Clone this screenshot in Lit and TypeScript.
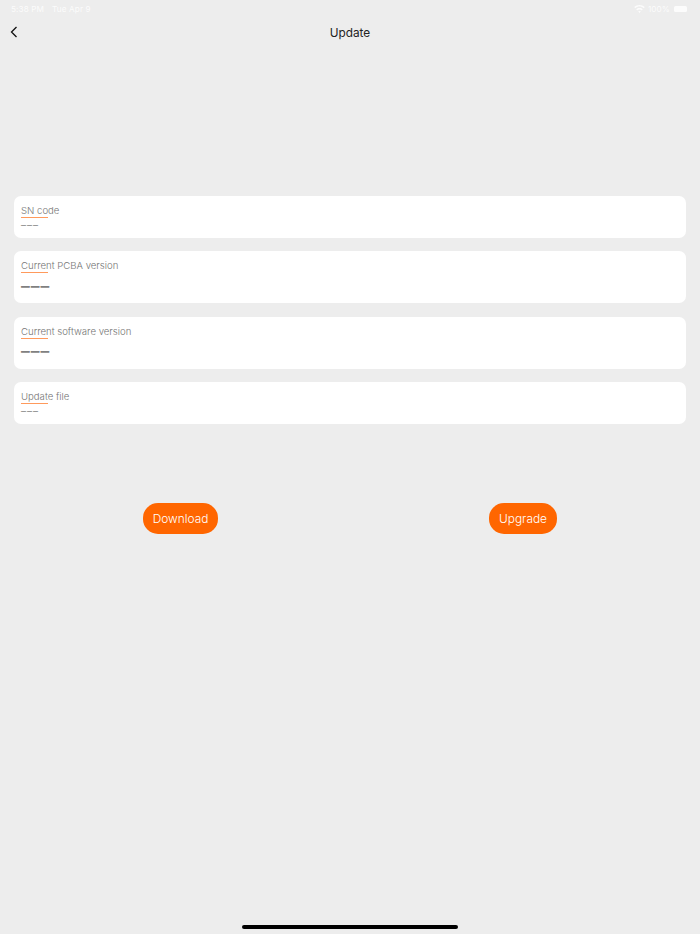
import { LitElement, html, css } from "lit";
import { customElement } from "lit/decorators.js";

@customElement("app-root")
export class AppRoot extends LitElement {
  static styles = css`
    :host { display: block; font-family: Inter, "Noto Sans", sans-serif; }
    .page { width: 700px; height: 934px; background: #ededed; display: flex; flex-direction: column; overflow: hidden; }
    .status { height: 16px; padding: 1px 13px 0 11px; display: flex; align-items: center; justify-content: space-between; color: #fff; font-size: 8.2px; opacity: .85; box-sizing: border-box; letter-spacing: .1px; }
    .left { display: flex; gap: 8px; }
    .right { display: flex; align-items: center; gap: 3px; }
    .battery { width: 13px; height: 6px; background: #fff; border-radius: 1.5px; margin-left: 1px; }
    .nav { height: 32px; padding-top: 1px; box-sizing: border-box; display: grid; grid-template-columns: 48px 1fr 48px; align-items: center; }
    .back { display: block; margin-left: 10px; margin-top: -1px; }
    .title { text-align: center; font-size: 11.8px; color: #222; }
    .cards { margin-top: 148px; padding: 0 14px; display: flex; flex-direction: column; gap: 13.6px; }
    .card { background: #fff; border-radius: 7px; padding: 8px 7px 0; box-sizing: border-box; }
    .card.short { height: 41.7px; }
    .card.tall { height: 52px; }
    .label { font-size: 9.6px; font-weight: 300; line-height: 13px; color: #757575; }
    .rule { width: 27px; height: 1px; background: #ff9a5c; }
    .value { color: #999; font-size: 10px; letter-spacing: 1px; line-height: 12px; height: 12px; margin-top: 1px; font-weight: 500; }
    .tall .value { font-size: 17.5px; color: #808080; line-height: 17px; height: 17px; margin-top: 3.5px; font-weight: 600; }
    .actions { margin-top: 79px; padding-left: 143px; display: flex; gap: 271px; }
    .btn { height: 31px; border: 0; border-radius: 15px; background: #ff6600; color: #fff; font: inherit; font-size: 11.9px; font-weight: 300; padding: 0; }
    .dl { width: 75px; }
    .up { width: 68px; }
    .spacer { flex: 1; }
    .home { width: 216px; height: 4px; border-radius: 2px; background: #000; align-self: center; margin-bottom: 5.5px; }
  `;

  private card(label: string, kind: string) {
    return html`<div class="card ${kind}">
      <div class="label">${label}</div>
      <div class="rule"></div>
      <div class="value">–––</div>
    </div>`;
  }

  render() {
    return html`<div class="page">
      <div class="status">
        <div class="left"><span>5:38 PM</span><span>Tue Apr 9</span></div>
        <div class="right">
          <svg width="11" height="8" viewBox="0 0 11 8" fill="#fff"><path d="M5.5 0C3.4 0 1.6.8.2 2.1l1 1.1C2.300 2.100 3.800 1.500 5.500 1.500s3.200.6 4.300 1.700l1-1.100C9.400.8 7.600 0 5.500 0zM5.500 3C4.200 3 3 3.500 2.200 4.300l1 1.100C3.800 4.800 4.600 4.500 5.500 4.500s1.700.3 2.300.9l1-1.100C8 3.500 6.800 3 5.500 3zM5.500 6c-.6 0-1.100.2-1.400.6L5.500 8l1.400-1.400C6.600 6.200 6.100 6 5.500 6z"/></svg>
          <span>100%</span>
          <div class="battery"></div>
        </div>
      </div>
      <div class="nav">
        <svg class="back" width="8" height="12" viewBox="0 0 8 12" fill="none" stroke="#111" stroke-width="1.300"><path d="M6.500 1 1.500 6l5 5"/></svg>
        <div class="title">Update</div>
      </div>
      <div class="cards">
        ${this.card("SN code", "short")}
        ${this.card("Current PCBA version", "tall")}
        ${this.card("Current software version", "tall")}
        ${this.card("Update file", "short")}
      </div>
      <div class="actions">
        <button class="btn dl">Download</button>
        <button class="btn up">Upgrade</button>
      </div>
      <div class="spacer"></div>
      <div class="home"></div>
    </div>`;
  }
}
